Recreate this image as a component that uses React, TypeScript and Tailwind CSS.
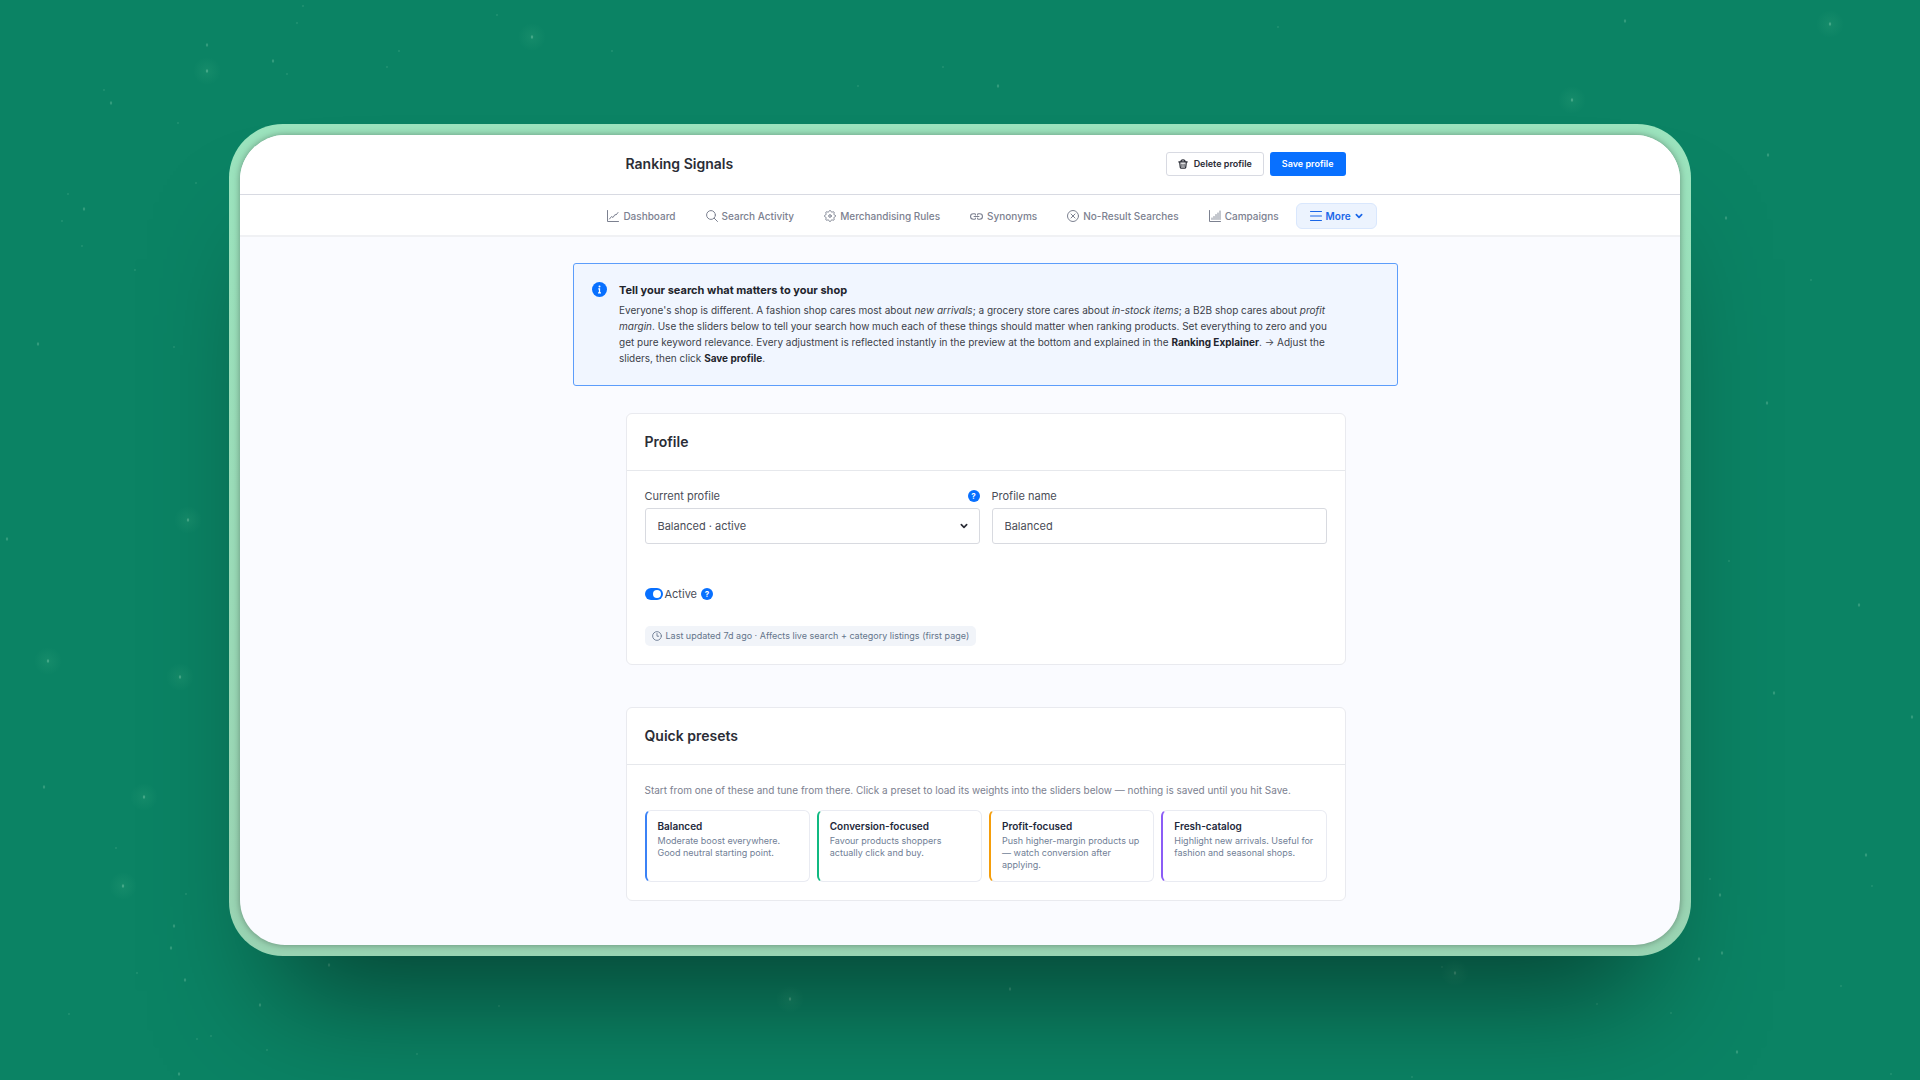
import { useState } from 'react'
import type { ReactNode } from 'react'

type IconProps = { className?: string }

const Stroke = ({ className = 'h-3 w-3', children }: IconProps & { children: ReactNode }) => (
  <svg viewBox="0 0 24 24" className={`shrink-0 ${className}`} fill="none" stroke="currentColor" strokeWidth={2} strokeLinecap="round" strokeLinejoin="round" aria-hidden="true">
    {children}
  </svg>
)

const DashboardIcon = () => (
  <Stroke>
    <path d="M1 1v22h22" />
    <path d="M5 18l4-5 3 2 4-6 2 1 4-5" />
  </Stroke>
)

const SearchIcon = () => (
  <Stroke>
    <circle cx="10" cy="10" r="8.8" />
    <path d="M16.5 16.5L23 23" />
  </Stroke>
)

// eight soft teeth around the hub
const gearPoints = Array.from({ length: 96 }, (_, i) => {
  const angle = (i / 96) * Math.PI * 2
  const radius = 9.8 + Math.cos(angle * 8) * 1.5
  return `${(12 + radius * Math.cos(angle)).toFixed(2)},${(12 + radius * Math.sin(angle)).toFixed(2)}`
}).join(' ')

const GearIcon = () => (
  <Stroke>
    <polygon points={gearPoints} />
    <circle cx="12" cy="12" r="2.6" />
  </Stroke>
)

const LinkIcon = () => (
  <Stroke className="h-[13px] w-[13px]">
    <path d="M10 15v.5A1.5 1.5 0 018.500 17H6A5 5 0 016 7h2.500A1.500 1.500 0 0110 8.500V9" />
    <path d="M14 9v-.5A1.500 1.500 0 0115.500 7H18a5 5 0 010 10h-2.500a1.500 1.500 0 01-1.500-1.500V15" />
    <path d="M7.500 12h9" />
  </Stroke>
)

const CrossCircleIcon = () => (
  <Stroke>
    <circle cx="12" cy="12" r="11" />
    <path d="M8 8l8 8M16 8l-8 8" />
  </Stroke>
)

const BarsIcon = () => (
  <Stroke>
    <path d="M1 1v22h22" />
    <path d="M6 19v-3M10 19v-6M14 19V9M18 19V6M22 19V2" strokeWidth={1.8} />
  </Stroke>
)

const MenuIcon = () => (
  <Stroke>
    <path d="M1 3h22M1 12h22M1 21h22" />
  </Stroke>
)

const ChevronIcon = ({ className }: IconProps) => (
  <Stroke className={className}>
    <path d="M4 8l8 8 8-8" strokeWidth={5} />
  </Stroke>
)

const TrashIcon = () => (
  <Stroke className="h-[10px] w-[10px]">
    <path d="M2 7h20M7 7c0-3 2-5 5-5s5 2 5 5M4 7l1.500 13a2.500 2.500 0 002.500 2h8a2.500 2.500 0 002.500-2L20 7" strokeWidth={3} />
    <path d="M9.500 12v6M14.500 12v6" strokeWidth={2.5} />
  </Stroke>
)

const ClockIcon = () => (
  <Stroke className="h-[10px] w-[10px]">
    <circle cx="12" cy="12" r="10.5" />
    <path d="M12 6v6.500h4" />
  </Stroke>
)

const InfoIcon = () => (
  <svg viewBox="0 0 30 30" className="h-[15px] w-[15px] shrink-0" aria-hidden="true">
    <circle cx="15" cy="15" r="15" fill="#0870ff" />
    <circle cx="15" cy="9" r="2" fill="#fff" />
    <path d="M12.500 13.500H15v8M12 21.500h6" stroke="#fff" strokeWidth="2.5" fill="none" />
  </svg>
)

const navItems = [
  { icon: DashboardIcon, label: 'Dashboard' },
  { icon: SearchIcon, label: 'Search Activity' },
  { icon: GearIcon, label: 'Merchandising Rules' },
  { icon: LinkIcon, label: 'Synonyms' },
  { icon: CrossCircleIcon, label: 'No-Result Searches' },
  { icon: BarsIcon, label: 'Campaigns' },
]

const presets = [
  { title: 'Balanced', text: 'Moderate boost everywhere. Good neutral starting point.', accent: 'border-l-[#3b82f6]' },
  { title: 'Conversion-focused', text: 'Favour products shoppers actually click and buy.', accent: 'border-l-[#10b981]' },
  { title: 'Profit-focused', text: 'Push higher-margin products up — watch conversion after applying.', accent: 'border-l-[#f59e0b]' },
  { title: 'Fresh-catalog', text: 'Highlight new arrivals. Useful for fashion and seasonal shops.', accent: 'border-l-[#8b5cf6]' },
]

// x, y, brightness
const stars = [
  [207, 45, 2], [207, 71, 3], [273, 61, 2], [287, 74, 1], [111, 103, 2], [178, 123, 1], [387, 67, 1], [399, 51, 1], [532, 37, 3],
  [497, 15, 1], [612, 51, 1], [303, 6, 1], [297, 23, 1], [196, 183, 1], [84, 209, 2], [62, 221, 1], [68, 194, 1], [82, 246, 1],
  [135, 270, 1], [38, 344, 2], [174, 347, 1], [104, 90, 1], [1866, 855, 2], [1872, 886, 1], [1720, 895, 2], [1699, 959, 2],
  [1722, 953, 2], [1841, 986, 1], [1597, 1004, 1], [1671, 1013, 1], [1737, 1052, 2], [1455, 973, 3], [1442, 967, 1], [1891, 1074, 1],
  [1412, 1077, 1], [1710, 879, 1], [123, 886, 3], [186, 894, 1], [174, 926, 2], [171, 948, 2], [185, 980, 2], [137, 973, 1],
  [260, 1005, 2], [211, 1036, 1], [197, 1039, 1], [267, 1050, 1], [179, 1074, 2], [69, 1014, 1], [329, 965, 2], [499, 1006, 1],
  [417, 1054, 1], [116, 848, 1], [1830, 24, 3], [1625, 21, 2], [1572, 100, 3], [1768, 155, 2], [1726, 218, 2], [1811, 280, 1],
  [1767, 403, 2], [1859, 605, 2], [1729, 561, 1], [1774, 693, 2], [1912, 717, 2], [188, 520, 3], [7, 539, 2], [48, 661, 3],
  [180, 677, 3], [44, 787, 2], [144, 797, 3], [1010, 989, 2], [790, 999, 3], [998, 86, 2], [858, 86, 1], [943, 67, 1], [1278, 27, 1],
]

const StarField = () => (
  <svg viewBox="0 0 1920 1080" preserveAspectRatio="xMidYMid slice" className="pointer-events-none absolute inset-0 h-full w-full" aria-hidden="true">
    <defs>
      <radialGradient id="glow">
        <stop offset="0" stopColor="#7fe0a8" stopOpacity="0.09" />
        <stop offset="1" stopColor="#7fe0a8" stopOpacity="0" />
      </radialGradient>
    </defs>
    {stars.map(([x, y, level]) => (
      <g key={`${x}-${y}`}>
        {level === 3 ? <circle cx={x} cy={y} r="14" fill="url(#glow)" /> : null}
        <ellipse cx={x} cy={y} rx={level > 1 ? 1.2 : 0.8} ry={level > 1 ? 1.8 : 1} fill="#a5e5c5" opacity={0.12 + level * 0.07} />
      </g>
    ))}
  </svg>
)

const HelpButton = ({ label }: { label: string }) => (
  <button type="button" aria-label={label} className="grid h-3 w-3 place-items-center rounded-full bg-[#0870ff] text-[8px] font-bold leading-none text-white">
    ?
  </button>
)

const Card = ({ title, children }: { title: string; children: ReactNode }) => (
  <section className="mx-auto w-full max-w-[720px] rounded-md border border-[#e9eaef] bg-white">
    <h2 className="border-b border-[#e6e8ec] px-[18px] py-[18px] text-sm font-semibold leading-5 text-[#2b2d36]">{title}</h2>
    {children}
  </section>
)

export default function App() {
  const [profileName, setProfileName] = useState('Balanced')
  const [active, setActive] = useState(true)

  return (
    <div className="relative flex min-h-screen items-center justify-center overflow-hidden bg-[#0b8364] font-['Inter',sans-serif]">
      <StarField />
      <div className="relative w-[calc(75%+22px)] overflow-hidden rounded-[54px] bg-linear-to-b from-[#9be3bd] to-[#99d3b2] p-[11px] shadow-[0_85px_120px_-50px_rgba(0,0,0,0.5)]">
        <div className="overflow-hidden rounded-[45px] bg-[#fafbff] shadow-[0_0_7px_rgba(0,0,0,0.35)]">
          <header className="border-b border-[#d8dae2] bg-white pl-[51px]">
            <div className="mx-auto flex max-w-[720px] items-center justify-between pb-[18px] pt-[17px]">
              <h1 className="text-sm font-semibold text-[#2b2d36]">Ranking Signals</h1>
              <div className="flex gap-1.5 text-[9px] font-semibold">
                <button type="button" className="flex h-6 items-center gap-1.5 rounded-[3px] border border-[#d8dae2] bg-white px-[11px] text-[#2b2d36]">
                  <TrashIcon />
                  Delete profile
                </button>
                <button type="button" className="h-6 rounded-[3px] bg-[#0870ff] px-3 text-white">Save profile</button>
              </div>
            </div>
          </header>

          <nav className="flex justify-center gap-1 border-b-2 border-[#f0f1f4] bg-white pb-1.5 pl-[51px] pt-2 text-[10px] font-medium text-[#7c8190]">
            {navItems.map(({ icon: Icon, label }) => (
              <a key={label} href="#" className="flex h-[26px] items-center gap-1 px-[13px]">
                <Icon />
                {label}
              </a>
            ))}
            <button type="button" className="flex h-[26px] items-center gap-1 rounded-md border border-[#d9e7fd] bg-[#ecf3fe] px-[13px] font-semibold text-[#1a66e8]">
              <MenuIcon />
              More
              <ChevronIcon className="h-2 w-2" />
            </button>
          </nav>

          <main className="pb-11 pl-[51px] pt-[26px]">
            <section className="mx-auto flex w-full max-w-[825px] gap-3 rounded-[3px] border border-[#5c9dfb] bg-[#f1f6ff] px-[18px] pb-[19px] pt-[18px]">
              <InfoIcon />
              <div className="max-w-[724px] leading-4 text-[#3c3f49]">
                <h2 className="mb-1 text-[11px] font-bold text-[#22242c]">Tell your search what matters to your shop</h2>
                <p className="text-[10px]">
                  Everyone's shop is different. A fashion shop cares most about <em>new arrivals</em>; a grocery store cares about <em>in-stock items</em>; a B2B shop cares about <em>profit margin</em>. Use the sliders below to tell your search how much each of these things should matter when ranking products. Set everything to zero and you get pure keyword relevance. Every adjustment is reflected instantly in the preview at the bottom and explained in the <strong className="text-[#22242c]">Ranking Explainer</strong>. → Adjust the sliders, then click <strong className="text-[#22242c]">Save profile</strong>.
                </p>
              </div>
            </section>

            <div className="mt-[27px] space-y-[42px]">
              <Card title="Profile">
                <div className="px-[18px] pb-[18px] pt-[17px] text-[11px] text-[#4a4d57]">
                  <div className="grid grid-cols-2 gap-3">
                    <div>
                      <div className="mb-1 flex h-4 items-center justify-between">
                        <label htmlFor="current-profile">Current profile</label>
                        <HelpButton label="About profiles" />
                      </div>
                      <div className="relative">
                        <select id="current-profile" className="h-9 w-full appearance-none rounded-[3px] border border-[#d8dae0] bg-white px-3">
                          <option>Balanced · active</option>
                        </select>
                        <span className="pointer-events-none absolute inset-y-0 right-3 flex items-center text-[#2b2d36]">
                          <ChevronIcon className="h-2 w-2" />
                        </span>
                      </div>
                    </div>
                    <div>
                      <label htmlFor="profile-name" className="mb-1 flex h-4 items-center">Profile name</label>
                      <input id="profile-name" value={profileName} onChange={(event) => setProfileName(event.target.value)} className="h-9 w-full rounded-[3px] border border-[#d8dae0] px-3" />
                    </div>
                  </div>

                  <div className="mt-[42px] flex h-4 items-center">
                    <input
                      id="active"
                      type="checkbox"
                      role="switch"
                      checked={active}
                      onChange={(event) => setActive(event.target.checked)}
                      className="flex h-3 w-[18px] appearance-none items-center rounded-full bg-[#c3c7d1] px-0.5 before:h-2 before:w-2 before:rounded-full before:bg-white checked:justify-end checked:bg-[#0870ff]"
                    />
                    <label htmlFor="active" className="ml-0.5 mr-1">Active</label>
                    <HelpButton label="About active profiles" />
                  </div>

                  <p className="mt-6 flex h-5 w-fit items-center gap-1 rounded-[5px] bg-[#f1f4f9] px-[7px] text-[9px] text-[#64748b]">
                    <ClockIcon />
                    Last updated 7d ago · Affects live search + category listings (first page)
                  </p>
                </div>
              </Card>

              <Card title="Quick presets">
                <div className="px-[18px] pb-[18px] pt-[17px]">
                  <p className="text-[10px] leading-4 text-[#7c8190]">
                    Start from one of these and tune from there. Click a preset to load its weights into the sliders below — nothing is saved until you hit Save.
                  </p>
                  <div className="mt-3 grid grid-cols-4 gap-[7px]">
                    {presets.map(({ title, text, accent }) => (
                      <button key={title} type="button" className={`flex min-h-[72px] flex-col rounded-md border border-l-2 border-[#e9ebf2] bg-white py-2 pl-[11px] pr-2 text-left ${accent}`}>
                        <span className="mb-0.5 text-[10px] font-semibold leading-[14px] text-[#1e293b]">{title}</span>
                        <span className="text-[9px] leading-3 text-[#718096]">{text}</span>
                      </button>
                    ))}
                  </div>
                </div>
              </Card>
            </div>
          </main>
        </div>
      </div>
    </div>
  )
}
